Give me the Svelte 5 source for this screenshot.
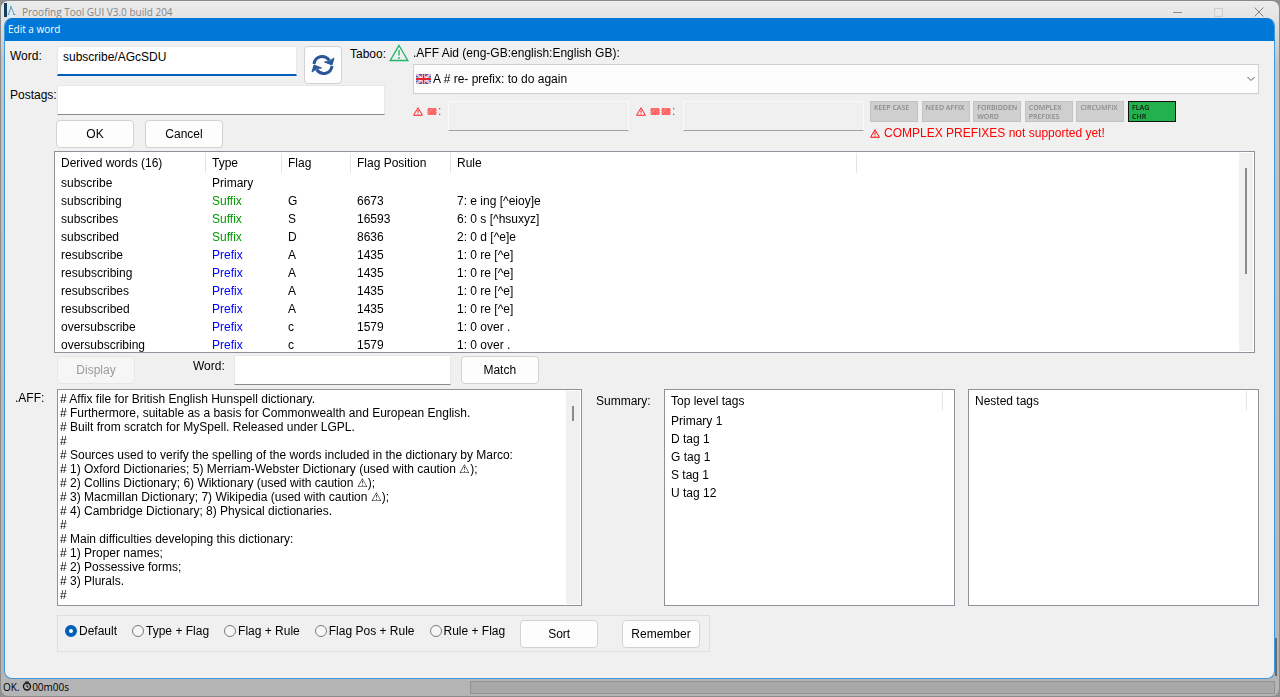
<script lang="ts">
    import { onMount } from 'svelte';

    interface DerivedWord {
        word: string;
        type: string;
        flag: string;
        position: string;
        rule: string;
    }

    let word = 'subscribe/AGcSDU';
    let postags = '';
    let matchWord = '';
    let sortOrder = 'Default';
    let affix = 'A';
    let wordInput: HTMLInputElement;

    const sortOrders = ['Default', 'Type + Flag', 'Flag + Rule', 'Flag Pos + Rule', 'Rule + Flag'];

    const options = [
        { label: 'KEEP CASE', on: false },
        { label: 'NEED AFFIX', on: false },
        { label: 'FORBIDDEN WORD', on: false },
        { label: 'COMPLEX PREFIXES', on: false },
        { label: 'CIRCUMFIX', on: false },
        { label: 'FLAG CHR', on: true },
    ];

    const derived: DerivedWord[] = [
        { word: 'subscribe', type: 'Primary', flag: '', position: '', rule: '' },
        { word: 'subscribing', type: 'Suffix', flag: 'G', position: '6673', rule: '7: e ing [^eioy]e' },
        { word: 'subscribes', type: 'Suffix', flag: 'S', position: '16593', rule: '6: 0 s [^hsuxyz]' },
        { word: 'subscribed', type: 'Suffix', flag: 'D', position: '8636', rule: '2: 0 d [^e]e' },
        { word: 'resubscribe', type: 'Prefix', flag: 'A', position: '1435', rule: '1: 0 re [^e]' },
        { word: 'resubscribing', type: 'Prefix', flag: 'A', position: '1435', rule: '1: 0 re [^e]' },
        { word: 'resubscribes', type: 'Prefix', flag: 'A', position: '1435', rule: '1: 0 re [^e]' },
        { word: 'resubscribed', type: 'Prefix', flag: 'A', position: '1435', rule: '1: 0 re [^e]' },
        { word: 'oversubscribe', type: 'Prefix', flag: 'c', position: '1579', rule: '1: 0 over .' },
        { word: 'oversubscribing', type: 'Prefix', flag: 'c', position: '1579', rule: '1: 0 over .' },
    ];

    const topTags = ['Primary 1', 'D tag 1', 'G tag 1', 'S tag 1', 'U tag 12'];

    let affText = `# Affix file for British English Hunspell dictionary.
# Furthermore, suitable as a basis for Commonwealth and European English.
# Built from scratch for MySpell. Released under LGPL.
#
# Sources used to verify the spelling of the words included in the dictionary by Marco:
# 1) Oxford Dictionaries; 5) Merriam-Webster Dictionary (used with caution ⚠);
# 2) Collins Dictionary; 6) Wiktionary (used with caution ⚠);
# 3) Macmillan Dictionary; 7) Wikipedia (used with caution ⚠);
# 4) Cambridge Dictionary; 8) Physical dictionaries.
#
# Main difficulties developing this dictionary:
# 1) Proper names;
# 2) Possessive forms;
# 3) Plurals.
#`;

    onMount(() => {
        wordInput.focus();
        wordInput.setSelectionRange(0, 0);
    });
</script>

{#snippet warning()}
    <svg class="warning" viewBox="0 0 20 18" aria-hidden="true">
        <path d="M10 1.5 L18.8 16.5 H1.2 Z M10 6 V11.5 M10 13 V15" />
    </svg>
{/snippet}

{#snippet hatch()}
    <svg class="hatch" viewBox="0 0 10 8" aria-hidden="true">
        <rect x="0" y="0" width="10" height="8" rx="1" fill="#ff8a8a" />
        <path d="M0 3 L3 0 M1 8 L9 0 M4 8 L10 2 M7 8 L10 5 M0 5 L3 8 M0 2 L6 8 M1 0 L9 8 M4 0 L10 6 M7 0 L10 3" stroke="#f33" stroke-width="0.7" />
    </svg>
{/snippet}

<div class="app-window">
    <header class="app-title">
        <svg class="logo" viewBox="0 0 12 14" aria-hidden="true">
            <rect width="12" height="14" fill="#e3eaee" />
            <rect width="3" height="14" fill="#163c5c" />
            <path d="M4.5 11 L7 4 L10 11 M6 3.5 H7.5 M3.5 11.5 H5.5 M9 11.5 H11.5" fill="none" stroke="#5b9cc4" />
        </svg>
        <span class="app-name">Proofing Tool GUI V3.0 build 204</span>
        <button class="win-button" aria-label="Minimize">
            <svg viewBox="0 0 10 10"><path d="M0 5.5 H9" stroke="#8c8c8c" /></svg>
        </button>
        <button class="win-button" aria-label="Maximize" disabled>
            <svg viewBox="0 0 10 10"><rect x="1.5" y="1.5" width="8" height="8" fill="none" stroke="#cdcdcd" /></svg>
        </button>
        <button class="win-button" aria-label="Close">
            <svg viewBox="0 0 10 10"><path d="M0.5 0.5 L9.5 9.5 M9.5 0.5 L0.5 9.5" stroke="#808080" /></svg>
        </button>
    </header>

    <main class="dialog">
        <h1>Edit a word</h1>

        <div class="dialog-body">
            <section class="top">
                <div class="word-column">
                    <div class="word-row">
                        <label for="word">Word:</label>
                        <input id="word" class="field active" spellcheck="false" bind:value={word} bind:this={wordInput} />
                        <button class="button refresh" aria-label="Refresh">
                            <svg viewBox="0 0 24 24" aria-hidden="true">
                                <path d="M3 11 C4 3.5 13 0.5 18.5 7.5" />
                                <path d="M21 13 C20 20.5 11 23.5 5.5 16.5" />
                                <path class="head" d="M23 5 L21 12 L13.5 9 L18 8.5 Z" />
                                <path class="head" d="M1 19 L3 12 L10.5 15 L6 15.5 Z" />
                            </svg>
                        </button>
                        <span class="taboo">Taboo: <span class="ok-sign">{@render warning()}</span></span>
                    </div>
                    <div class="postags-row">
                        <label for="postags">Postags:</label>
                        <input id="postags" class="field" bind:value={postags} />
                    </div>
                    <div class="confirm-row">
                        <button class="button">OK</button>
                        <button class="button">Cancel</button>
                    </div>
                </div>

                <div class="aid-column">
                    <label class="aid-label" for="affix">.AFF Aid (eng-GB:english:English GB):</label>
                    <div class="select-wrap">
                        <svg class="flag" viewBox="0 0 15 10" aria-hidden="true">
                            <rect width="15" height="10" fill="#3f55a8" />
                            <path d="M0 0 L15 10 M15 0 L0 10" stroke="#fff" stroke-width="2" />
                            <path d="M0 0 L15 10 M15 0 L0 10" stroke="#e0405a" stroke-width="0.6" />
                            <path d="M7.5 0 V10 M0 5 H15" stroke="#fff" stroke-width="3.2" />
                            <path d="M7.5 0 V10 M0 5 H15" stroke="#e32636" stroke-width="1.8" />
                        </svg>
                        <select id="affix" bind:value={affix}>
                            <option value="A">A # re- prefix: to do again</option>
                        </select>
                        <svg class="chevron" viewBox="0 0 8 6" aria-hidden="true">
                            <path d="M0.5 1 L4 4.5 L7.5 1" fill="none" stroke="#555" />
                        </svg>
                    </div>
                    <div class="aid-row">
                        <label class="alert-label" for="aid-one">{@render warning()}<span class="blocks">{@render hatch()}:</span></label>
                        <input id="aid-one" class="field blank" disabled />
                        <label class="alert-label second" for="aid-two">{@render warning()}<span class="blocks">{@render hatch()}{@render hatch()}:</span></label>
                        <input id="aid-two" class="field blank" disabled />
                        <div class="options">
                            <div class="chips">
                                {#each options as option}
                                    <span class="chip" class:on={option.on}>{option.label}</span>
                                {/each}
                            </div>
                            <p class="alert">{@render warning()}COMPLEX PREFIXES not supported yet!</p>
                        </div>
                    </div>
                </div>
            </section>

            <section class="derived">
                <table>
                    <thead>
                        <tr>
                            <th class="col-word">Derived words (16)</th>
                            <th class="col-type">Type</th>
                            <th class="col-flag">Flag</th>
                            <th class="col-position">Flag Position</th>
                            <th class="col-rule">Rule</th>
                            <th class="col-rest"></th>
                        </tr>
                    </thead>
                    <tbody>
                        {#each derived as row}
                            <tr>
                                <td>{row.word}</td>
                                <td class={row.type.toLowerCase()}>{row.type}</td>
                                <td>{row.flag}</td>
                                <td>{row.position}</td>
                                <td>{row.rule}</td>
                                <td></td>
                            </tr>
                        {/each}
                    </tbody>
                </table>
                <div class="scrollbar"><div class="thumb long"></div></div>
            </section>

            <section class="match-row">
                <button class="button" disabled>Display</button>
                <label for="match">Word:</label>
                <input id="match" class="field" bind:value={matchWord} />
                <button class="button">Match</button>
            </section>

            <section class="details">
                <label class="aff-label" for="aff">.AFF:</label>
                <div class="aff-box">
                    <textarea id="aff" spellcheck="false" wrap="off" bind:value={affText}></textarea>
                    <div class="scrollbar"><div class="thumb short"></div></div>
                </div>
                <span class="summary-label">Summary:</span>
                <div class="tag-list">
                    <table>
                        <thead><tr><th>Top level tags</th></tr></thead>
                        <tbody>
                            {#each topTags as tag}
                                <tr><td>{tag}</td></tr>
                            {/each}
                        </tbody>
                    </table>
                </div>
                <div class="tag-list">
                    <table>
                        <thead><tr><th>Nested tags</th></tr></thead>
                    </table>
                </div>
            </section>

            <section class="sort-row">
                {#each sortOrders as order}
                    <label class="radio">
                        <input type="radio" name="sort" value={order} bind:group={sortOrder} />
                        {order}
                    </label>
                {/each}
                <button class="button sort">Sort</button>
                <button class="button">Remember</button>
            </section>
        </div>
    </main>

    <footer class="status">
        <span class="status-text">OK.
            <svg viewBox="0 0 10 10" aria-hidden="true">
                <circle cx="5" cy="5.5" r="3.5" fill="none" stroke="#111" stroke-width="1.4" />
                <path d="M3 1 H7 M5 3.5 V6 H6.5" fill="none" stroke="#111" />
            </svg>00m00s</span>
        <span class="progress"></span>
    </footer>
    <div class="app-thumb"></div>
</div>

<style>
    :global(body) {
        background: #8f8f8f;
    }
    .app-window {
        --edge: #8d939a;
        position: relative;
        box-sizing: border-box;
        display: flex;
        flex-direction: column;
        min-height: 100vh;
        padding: 0 4px 1px 3px;
        border: 1px solid #8a8a8a;
        border-radius: 8px;
        background: linear-gradient(#ececec, #e2e2e2 20px, #c4c4c4 60px, #b4b4b4);
        font-family: 'Liberation Sans', Arial, sans-serif;
        font-size: 12px;
        line-height: 16px;
        color: #000;
    }
    button,
    input,
    select,
    textarea {
        font: inherit;
        color: inherit;
    }
    .app-title {
        display: flex;
        align-items: center;
        height: 16px;
        padding-top: 1px;
        color: #858585;
    }
    .logo {
        width: 12px;
        height: 14px;
        margin-right: 6px;
    }
    .app-name {
        flex: 1;
        font-family: 'Open Sans', sans-serif;
        font-size: 10px;
        padding-top: 4px;
    }
    .win-button {
        width: 40px;
        padding: 4px 0 0;
        border: 0;
        background: none;
    }
    .win-button svg {
        display: block;
        width: 10px;
        height: 10px;
        margin: 0 auto;
    }
    .win-button:last-child {
        margin-right: -4px;
    }
    .win-button:last-child {
        width: 20px;
        margin: 0 6px 0 11px;
    }
    .dialog {
        flex: 1;
        border: 1px solid #3c97dc;
        border-top: 0;
        border-radius: 8px;
        background: #f0f0f0;
        overflow: hidden;
    }
    h1 {
        margin: 0;
        padding: 0 3px;
        background: #0078d7;
        color: #fff;
        font-family: 'Open Sans', sans-serif;
        font-size: 10px;
        font-weight: 400;
        line-height: 23px;
    }
    .dialog-body {
        padding: 5px 15px 0 5px;
    }
    .button {
        box-sizing: border-box;
        flex: none;
        width: 78px;
        height: 28px;
        padding: 0;
        border: 1px solid #d2d2d2;
        border-radius: 4px;
        background: #fdfdfd;
    }
    .button:disabled {
        border-color: #e6e6e6;
        background: #f6f6f6;
        color: #9a9a9a;
    }
    .field {
        box-sizing: border-box;
        height: 30px;
        min-width: 0;
        padding: 0 5px 8px;
        border: 1px solid #e8e8e8;
        border-bottom: 1px solid #8a8a8a;
        background: #fff;
        outline: 0;
    }
    .field.active {
        border-bottom: 2px solid #005fb8;
    }
    .field.blank {
        flex: 1;
        border-color: #fafafa;
        border-bottom-color: #a0a0a0;
        background: #f0f0f0;
    }
    .top {
        display: flex;
        height: 105px;
    }
    .word-column {
        flex: none;
        width: 403px;
    }
    .word-row {
        display: flex;
        align-items: flex-start;
    }
    .word-row label,
    .postags-row label {
        width: 47px;
        padding-top: 2px;
    }
    .word-row .field {
        width: 240px;
    }
    .refresh {
        width: 38px;
        height: 38px;
        margin-left: 7px;
    }
    .refresh svg {
        display: block;
        width: 24px;
        height: 24px;
        margin: 0 auto;
        fill: none;
        stroke: #2b579a;
        stroke-width: 3;
    }
    .refresh .head {
        fill: #2b579a;
        stroke-width: 1;
    }
    .taboo {
        display: flex;
        margin-left: 8px;
    }
    .warning {
        width: 10px;
        height: 9px;
        fill: none;
        stroke: currentColor;
        stroke-width: 2;
    }
    .ok-sign {
        margin-left: 3px;
        color: #22b56a;
    }
    .ok-sign .warning {
        display: block;
        width: 20px;
        height: 18px;
        margin-top: -2px;
        stroke-width: 1.4;
    }
    .postags-row {
        display: flex;
        margin-top: 1px;
    }
    .postags-row .field {
        width: 328px;
    }
    .confirm-row {
        display: flex;
        gap: 11px;
        padding: 5px 0 0 46px;
    }
    .aid-column {
        flex: 1;
        min-width: 0;
    }
    .aid-label {
        display: block;
        line-height: 14px;
    }
    .select-wrap {
        position: relative;
        margin-top: 4px;
    }
    .select-wrap select {
        box-sizing: border-box;
        display: block;
        width: 100%;
        height: 30px;
        padding: 0 20px 1px 19px;
        appearance: none;
        border: 1px solid #cfcfcf;
        border-radius: 0;
        background: #fdfdfd;
    }
    .flag {
        position: absolute;
        top: 10px;
        left: 3px;
        width: 15px;
        height: 10px;
    }
    .chevron {
        position: absolute;
        top: 12px;
        right: 4px;
        width: 8px;
        height: 6px;
    }
    .aid-row {
        display: flex;
        align-items: flex-start;
        margin-top: 7px;
    }
    .alert-label {
        display: flex;
        align-items: center;
        gap: 4px;
        width: 35px;
        padding-top: 2px;
        color: #f22;
    }
    .alert-label.second {
        width: 47px;
        padding-left: 7px;
    }
    .blocks {
        display: flex;
        align-items: center;
        gap: 1px;
    }
    .hatch {
        width: 10px;
        height: 7px;
    }
    .options {
        width: 389px;
        margin-left: 6px;
    }
    .chips {
        display: flex;
        justify-content: space-between;
        width: 306px;
    }
    .chip {
        box-sizing: border-box;
        width: 48px;
        height: 21px;
        padding: 1px 0 0 3px;
        border: 1px solid #c2c2c2;
        background: #cfcfcf;
        color: #8a8a8a;
        font-family: 'Open Sans', sans-serif;
        font-size: 7px;
        font-weight: 600;
        line-height: 9px;
    }
    .chip.on {
        padding-right: 16px;
        border-color: #111;
        background: #22b14c;
        color: #111;
    }
    .alert {
        display: flex;
        align-items: center;
        gap: 4px;
        margin: 3px 0 0;
        color: #f00;
    }
    .derived {
        position: relative;
        height: 200px;
        margin: 0 4px 0 44px;
        border: 1px solid var(--edge);
        background: #fff;
        overflow: hidden;
    }
    table {
        width: 100%;
        border-collapse: collapse;
        table-layout: fixed;
    }
    th,
    td {
        height: 18px;
        padding: 0 0 0 6px;
        font-weight: 400;
        line-height: 16px;
        text-align: left;
        white-space: nowrap;
    }
    th {
        height: 22px;
        background: linear-gradient(#e5e5e5, #e5e5e5) right / 1px 20px no-repeat;
    }
    .col-rest {
        background: none;
    }
    .col-word {
        width: 145px;
    }
    .col-type {
        width: 70px;
    }
    .col-flag {
        width: 63px;
    }
    .col-position {
        width: 94px;
    }
    .col-rule {
        width: 400px;
    }
    .suffix {
        color: #009a00;
    }
    .prefix {
        color: #00f;
    }
    .scrollbar {
        position: absolute;
        top: 1px;
        right: 1px;
        bottom: 1px;
        width: 14px;
        background: #f0f0f0;
    }
    .thumb {
        width: 2px;
        margin: 15px auto 0;
        background: #8a8a8a;
    }
    .long {
        height: 106px;
    }
    .short {
        height: 15px;
    }
    .match-row {
        display: flex;
        align-items: center;
        gap: 10px;
        margin: 2px 0 4px 47px;
    }
    .match-row label {
        margin-left: 48px;
        padding-bottom: 8px;
    }
    .match-row .field {
        width: 217px;
        margin-left: -1px;
    }
    .details {
        display: flex;
        height: 217px;
    }
    .aff-label {
        box-sizing: border-box;
        width: 47px;
        padding: 1px 0 0 5px;
    }
    .aff-box {
        box-sizing: border-box;
        position: relative;
        flex: none;
        width: 525px;
        border: 1px solid var(--edge);
        background: #fff;
    }
    textarea {
        box-sizing: border-box;
        display: block;
        width: 100%;
        height: 100%;
        padding: 2px 16px 0 2px;
        border: 0;
        outline: 0;
        background: none;
        line-height: 14px;
        resize: none;
        overflow: hidden;
    }
    .summary-label {
        width: 68px;
        padding: 4px 0 0 14px;
    }
    .tag-list {
        box-sizing: border-box;
        flex: 1;
        border: 1px solid var(--edge);
        background: #fff;
    }
    .tag-list th {
        background-position: right 11px center;
    }
    .tag-list + .tag-list {
        margin-left: 13px;
    }
    .sort-row {
        box-sizing: border-box;
        display: flex;
        align-items: center;
        width: 653px;
        height: 37px;
        margin: 9px 0 0 47px;
        padding: 0 9px 0 7px;
        border: 1px solid #dfdfdf;
    }
    .radio {
        display: flex;
        align-items: center;
        margin-right: 15px;
        padding-bottom: 5px;
        gap: 2px;
    }
    .radio input {
        box-sizing: border-box;
        width: 12px;
        height: 12px;
        margin: 0;
        appearance: none;
        border: 1px solid #7a7a7a;
        border-radius: 50%;
        background: #f6f6f6;
    }
    .radio input:checked {
        border: 4px solid #005fb8;
        background: #fff;
    }
    .sort {
        margin-right: auto;
    }
    .status {
        display: flex;
        align-items: center;
        height: 16px;
    }
    .status-text {
        flex: none;
        width: 467px;
        margin-left: -1px;
        font-family: 'Open Sans', sans-serif;
        font-size: 10px;
        line-height: 14px;
    }
    .status-text svg {
        width: 10px;
        height: 10px;
    }
    .progress {
        box-sizing: border-box;
        flex: 1;
        height: 13px;
        border: 1px solid #929292;
        background: #a8a8a8;
    }
    .app-thumb {
        position: absolute;
        right: 2px;
        bottom: 20px;
        width: 2px;
        height: 38px;
        background: #6a6a6a;
    }
</style>
